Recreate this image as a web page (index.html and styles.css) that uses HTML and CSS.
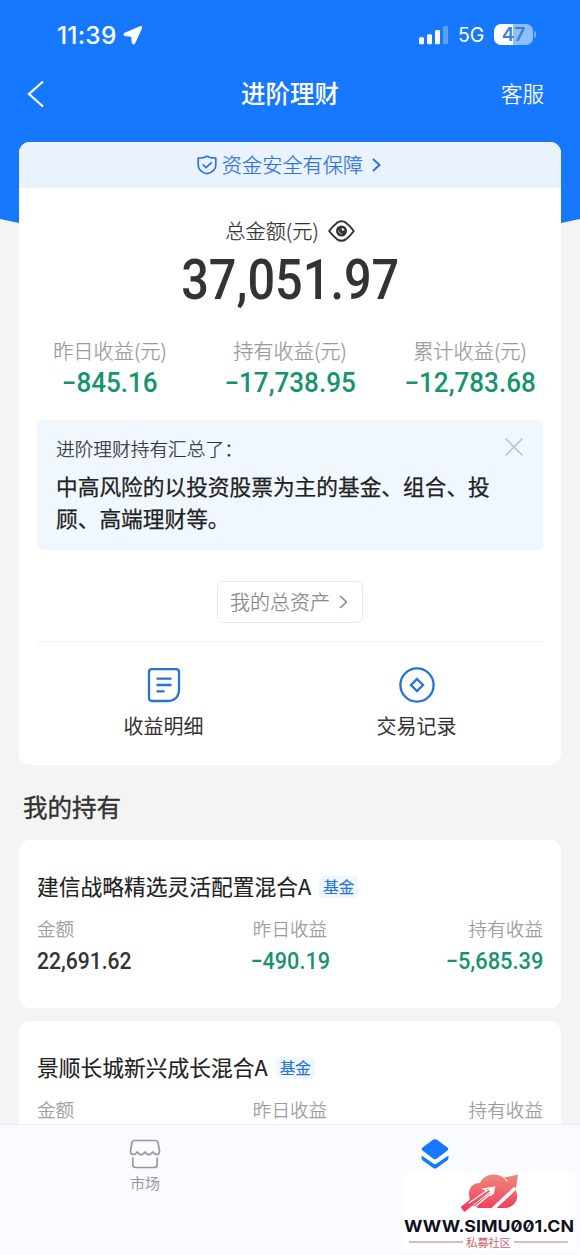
FILE: index.html
```html
<!DOCTYPE html>
<html lang="zh-CN">
<head>
<meta charset="utf-8">
<title>进阶理财</title>
<link rel="stylesheet" href="styles.css">
</head>
<body>
<div class="app">
  <main class="content">
    <header class="hero">
      <div class="status">
        <span class="clock">11:39</span>
        <svg class="locate" width="20" height="20" viewBox="0 0 20 20"><path d="M17.300 1.700 2 8.200C.8 8.800.8 10.400 2.200 10.600L8.800 11.200 9.300 17.500C9.500 19.100 11.100 19.200 11.700 18L18.500 3C18.900 2 18.300 1.300 17.300 1.700Z" fill="#fff" stroke="#fff" stroke-width="1.200"/></svg>
        <svg class="signal" width="30" height="20" viewBox="0 0 30 20"><g fill="#fff"><rect x="0" y="12.200" width="5" height="7" rx="1.300"/><rect x="8" y="9.200" width="5" height="10" rx="1.300"/><rect x="16" y="5" width="5" height="14.200" rx="1.300"/><rect x="24" y="1" width="5" height="18.200" rx="1.300" opacity=".3"/></g></svg>
        <span class="network">5G</span>
        <span class="battery">47</span>
        <span class="battery-cap"></span>
      </div>
      <nav class="nav">
        <svg class="back" width="18" height="28" viewBox="0 0 18 28"><path d="M16 1.500 2 14 16 26.500" fill="none" stroke="#fff" stroke-width="2.200"/></svg>
        <h1 class="title">进阶理财</h1>
        <span class="service">客服</span>
      </nav>
    </header>

    <section class="summary">
      <div class="safety">
        <svg width="20" height="20" viewBox="0 0 20 20" fill="none" stroke="#2e75da" stroke-width="1.700"><path d="M10 1.200C7.500 2.700 4.500 3.200 1.200 3.200V10c0 4.500 4 7.500 8.800 8.800 4.800-1.300 8.800-4.300 8.800-8.800V3.200C15.500 3.200 12.500 2.700 10 1.200Z" stroke-linejoin="round"/><path d="m5.800 9.300 3.300 3.300 5.600-5.300"/></svg>
        <span>资金安全有保障</span>
        <svg class="safety-arrow" width="9" height="14" viewBox="0 0 9 14"><path d="m1 1 6.500 6L1 13" fill="none" stroke="#2e75da" stroke-width="2"/></svg>
      </div>
      <div class="total-label">
        <span>总金额(元)</span>
        <svg width="27" height="22" viewBox="0 0 27 22"><path d="M1.200 11C3 8.500 5.500 5.500 8.800 2.900Q13.500-.4 18.200 2.900C21.500 5.500 24 8.500 25.800 11 24 13.500 21.500 16.500 18.200 19.100Q13.500 22.400 8.800 19.100C5.500 16.500 3 13.500 1.200 11Z" fill="none" stroke="#333" stroke-width="1.900"/><circle cx="13.500" cy="11" r="5.500" fill="#333"/><path d="M13.800 7.800V10.600H16.600A3.400 3.400 0 0 0 13.800 7.800Z" fill="#fff"/><path d="M10.700 10.500A3 3 0 0 0 14 13.800" fill="none" stroke="#fff" stroke-width=".7"/></svg>
      </div>
      <div class="total"><span class="total-num">37,051.97</span></div>
      <div class="stats">
        <div class="stat"><span class="stat-label">昨日收益(元)</span><span class="stat-value">−845.16</span></div>
        <div class="stat"><span class="stat-label">持有收益(元)</span><span class="stat-value">−17,738.95</span></div>
        <div class="stat"><span class="stat-label">累计收益(元)</span><span class="stat-value">−12,783.68</span></div>
      </div>
      <div class="tip">
        <div class="tip-head"><span>进阶理财持有汇总了：</span>
          <svg width="20" height="20" viewBox="0 0 20 20"><path d="m1.500 1.500 17 17m0-17-17 17" stroke="#bfc6d3" stroke-width="1.700"/></svg>
        </div>
        <p class="tip-body">中高风险的以投资股票为主的基金、组合、投顾、高端理财等。</p>
      </div>
      <div class="assets">
        <span>我的总资产</span>
        <svg width="9" height="14" viewBox="0 0 9 14"><path d="m1 1 6.500 6L1 13" fill="none" stroke="#888" stroke-width="1.600"/></svg>
      </div>
      <div class="actions">
        <div class="action">
          <svg width="36" height="36" viewBox="0 0 36 36" fill="none" stroke="#2672d9" stroke-width="2.300"><path d="M6 2.200H30Q33 2.200 33 5.200V22Q33 34 21 34H6Q3 34 3 31V5.200Q3 2.200 6 2.200Z"/><path d="M10.500 11.700H25.500M10.500 18H25.500M10.500 24.300H18.500"/></svg>
          <span>收益明细</span>
        </div>
        <div class="action">
          <svg width="36" height="36" viewBox="0 0 36 36" fill="none" stroke="#2672d9" stroke-width="2.300"><circle cx="18" cy="18" r="16.600"/><path d="m18 12 6 6-6 6-6-6Z"/></svg>
          <span>交易记录</span>
        </div>
      </div>
    </section>

    <h2 class="section-title">我的持有</h2>

    <article class="fund">
      <div class="fund-head"><span class="fund-name">建信战略精选灵活配置混合A</span><span class="tag">基金</span></div>
      <div class="fund-grid">
        <div class="cell"><span class="cell-label">金额</span><span class="cell-value">22,691.62</span></div>
        <div class="cell center"><span class="cell-label">昨日收益</span><span class="cell-value loss">−490.19</span></div>
        <div class="cell right"><span class="cell-label">持有收益</span><span class="cell-value loss">−5,685.39</span></div>
      </div>
    </article>
    <article class="fund">
      <div class="fund-head"><span class="fund-name">景顺长城新兴成长混合A</span><span class="tag">基金</span></div>
      <div class="fund-grid">
        <div class="cell"><span class="cell-label">金额</span></div>
        <div class="cell center"><span class="cell-label">昨日收益</span></div>
        <div class="cell right"><span class="cell-label">持有收益</span></div>
      </div>
    </article>
  </main>

  <footer class="tabbar">
    <div class="tab">
      <svg width="32" height="30" viewBox="0 0 32 30" fill="none" stroke="#999" stroke-width="1.700"><path d="M5.500 1.500H26.500Q28.600 1.500 29 3.500L30.500 12Q30.800 15.500 27.500 15.500 25.500 15.500 23.800 13 21.800 15.800 19.800 15.800 17.800 15.800 16 13 14.200 15.800 12.200 15.800 10.200 15.800 8.300 13 6.500 15.500 4.500 15.500 1.200 15.500 1.500 12L3 3.500Q3.400 1.500 5.500 1.500Z" stroke-linejoin="round"/><path d="M3.800 18.500V25.500Q3.800 28.500 6.800 28.500H25.200Q28.200 28.500 28.200 25.500V18.500"/></svg>
      <span>市场</span>
    </div>
    <div class="tab">
      <svg width="28" height="30" viewBox="0 0 28 30" fill="#1677ff"><path d="M12.300.6Q14-.3 15.700.6L26.400 8.600Q28.200 10.100 26.400 11.500L15.700 19.700Q14 20.700 12.300 19.700L1.600 11.500Q-.2 10.100 1.600 8.600Z"/><path d="M.6 16.500 12.300 24.400Q14 25.400 15.700 24.400L27.400 16.500V19.500Q27.300 20.700 26.200 21.500L15.700 29Q14 30 12.300 29L1.800 21.500Q.7 20.700.6 19.500Z"/></svg>
    </div>
  </footer>

  <div class="watermark">
    <svg width="172" height="78" viewBox="0 0 172 78">
      <defs><linearGradient id="cloud" gradientUnits="userSpaceOnUse" x1="0" y1="2" x2="0" y2="40"><stop offset="0" stop-color="#ee8a7c"/><stop offset="1" stop-color="#f5355a"/></linearGradient></defs>
      <path d="M66.500 25C64 17 70 10.500 77 11 82 0 99 0 103.500 9.500 110 8.500 114 14 113 19 117 28 110 36 102 36H72L66.500 32Z" fill="url(#cloud)"/>
      <path d="M62 40 87 21 89.500 24 91 15.500 81 17 83.500 19.500 66 32 78 37Z" fill="#fff"/>
      <path d="M57.500 35 83 15 87 19.500 61.500 40Z" fill="url(#cloud)"/>
      <path d="M66 31 84 18.500 80.500 17 91.500 15 89.500 25.500 87 22.500 70 36.500" fill="none" stroke="#fff" stroke-width="1.300"/>
      <path d="M89 38 114 14.500" stroke="#fff" stroke-width="3.600"/>
      <path d="M101 5.500 115 2.500 113 16.500 109.500 12.500 84 36H75L105 9Z" fill="url(#cloud)"/>
      <text class="mark-url" x="1" y="59.500" textLength="170" lengthAdjust="spacingAndGlyphs">WWW.SIMU001.CN</text>
      <path d="M6 70H60M111 70H165" stroke="#cf6f75" stroke-width="1.200"/>
      <text class="mark-name" x="63" y="74.500" textLength="45">私募社区</text>
    </svg>
  </div>
</div>
</body>
</html>
```
FILE: styles.css
```css
* { box-sizing: border-box; }
body {
  margin: 0;
  background: #f4f4f4;
  color: #333;
  font-family: "Noto Sans CJK SC", sans-serif;
}
h1, h2, p { margin: 0; }
svg { display: block; flex: none; }
.app {
  position: relative;
  display: flex;
  flex-direction: column;
  width: 580px;
  height: 1255px;
  overflow: hidden;
}
.content { height: 1124px; overflow: hidden; }

/* Header */
.hero {
  height: 240px;
  background: #1677ff;
  color: #fff;
  clip-path: polygon(0 0, 100% 0, 100% 219px, 561px 223px, 500px 235px, 80px 235px, 19px 223px, 0 219px);
}
.status {
  display: flex;
  align-items: center;
  height: 70px;
  padding: 0 44px 0 57px;
}
.clock { font: 500 24.500px/30px Inter, sans-serif; width: 62px; letter-spacing: .2px; }
.locate { margin-left: 4px; }
.signal { margin-left: auto; margin-bottom: 1px; }
.network { margin-left: 9px; width: 27px; font: 400 19.500px/24px Inter, sans-serif; }
.battery {
  margin-left: 9px;
  margin-bottom: 2px;
  width: 39px;
  height: 21px;
  border-radius: 7px;
  background: linear-gradient(90deg, #fff 48%, #8fbfff 48%);
  color: #3f7fd2;
  font: 600 19px/21px Inter, sans-serif;
  text-align: center;
}
.battery-cap { width: 2px; height: 7px; margin: 0 0 2px 1px; border-radius: 0 2px 2px 0; background: #73adff; }
.nav {
  display: grid;
  grid-template-columns: 1fr auto 1fr;
  align-items: center;
  height: 48px;
  padding: 0 36px 0 27px;
}
.title { font-size: 24.500px; line-height: 46px; font-weight: 500; padding-bottom: 2px; margin-right: -9px; }
.service { justify-self: end; font-size: 21.500px; line-height: 46px; padding-bottom: 2px; }
.service, .safety span, .total-label span, .stat-label, .tip-head span, .assets span, .cell-label {
  font-weight: 300;
  -webkit-text-stroke: .25px currentColor;
}

/* Summary card */
.summary {
  position: relative;
  width: 542px;
  height: 623px;
  margin: -98px 19px 0;
  background: #fff;
  border-radius: 11px;
  overflow: hidden;
}
.safety {
  display: flex;
  align-items: center;
  justify-content: center;
  gap: 5px;
  height: 46px;
  padding-right: 2px;
  background: #eaf2fe;
  color: #2e75da;
  font-size: 20.200px;
}
.safety span, .total-label span, .assets span { padding-bottom: 2px; }
.safety-arrow { margin-left: 4px; }
.total-label {
  display: flex;
  align-items: center;
  justify-content: center;
  gap: 9px;
  height: 30px;
  margin-top: 28px;
  font-size: 20.200px;
}
.total { display: flex; justify-content: center; height: 64px; margin-top: 1px; }
.total-num {
  font: 500 55px/66px Roboto, sans-serif;
  transform: scaleX(.885);
}
.stats { display: grid; grid-template-columns: repeat(3, 180px); height: 92px; padding: 25px 0 0 1px; }
.stat { display: flex; flex-direction: column; align-items: center; }
.stat-label { font-size: 20.200px; line-height: 30px; color: #999; }
.stat-value, .loss { color: #16936f; }
.stat-value { font: 500 27px/34px Roboto, sans-serif; transform: scaleX(.965); }
.tip {
  width: 506px;
  height: 130px;
  margin: 17px 18px 0;
  padding: 13px 19px;
  background: #f0f7ff;
  border-radius: 5px;
}
.tip-head { display: flex; justify-content: space-between; height: 30px; font-size: 18.700px; line-height: 30px; }
.tip-head svg { margin-top: 4px; }
.tip-body { width: 440px; margin-top: 7px; font-size: 21.700px; line-height: 32px; font-weight: 400; color: #222; -webkit-text-stroke: .25px currentColor; }
.assets {
  display: flex;
  align-items: center;
  justify-content: center;
  gap: 9px;
  width: 146px;
  height: 42px;
  margin: 31px auto 0;
  padding-right: 2px;
  border: 1px solid #e8e8e8;
  border-radius: 6px;
  font-size: 20px;
  color: #888;
}
.actions {
  display: grid;
  grid-template-columns: 1fr 1fr;
  margin: 18px 18px 0;
  padding-top: 25px;
  border-top: 1px solid #f3f3f3;
}
.action { display: flex; flex-direction: column; align-items: center; font-size: 20px; line-height: 30px; gap: 8px; }

/* Holdings */
.section-title { margin: 22px 0 0 23px; font-size: 24.500px; line-height: 39px; height: 40px; font-weight: 400; -webkit-text-stroke: .4px currentColor; }
.fund {
  width: 542px;
  height: 168px;
  margin: 13px 19px 0;
  padding: 30px 18px 0;
  background: #fff;
  border-radius: 11px;
}
.fund-head { display: flex; align-items: center; height: 32px; gap: 8px; }
.fund-name { font-size: 21.750px; line-height: 32px; color: #222; -webkit-text-stroke: .15px currentColor; }
.tag {
  width: 39px;
  height: 22px;
  margin-top: 1px;
  background: #eff7ff;
  border-radius: 3px;
  color: #2672d9;
  font-size: 15.500px;
  line-height: 21px;
  text-align: center;
  -webkit-text-stroke: .2px currentColor;
}
.fund-grid { display: grid; grid-template-columns: repeat(3, 1fr); padding-top: 11px; }
.cell { display: flex; flex-direction: column; align-items: flex-start; }
.cell-label { font-size: 18.600px; line-height: 30px; color: #999; }
.cell-value { font: 500 24px/34px Roboto, sans-serif; margin-top: 1px; transform: scaleX(.88); transform-origin: left; }
.center { align-items: center; }
.right { align-items: flex-end; }
.center .cell-value { transform: scaleX(.9); transform-origin: center; }
.right .cell-value { transform: scaleX(.91); transform-origin: right; }

/* Bottom navigation */
.tabbar {
  display: grid;
  grid-template-columns: 1fr 1fr;
  height: 131px;
  padding-top: 14px;
  background: #f9fbff;
  border-top: 1px solid #ececf0;
}
.tab { display: flex; flex-direction: column; align-items: center; gap: 3px; font-size: 15px; line-height: 22px; color: #999; }
.watermark { position: absolute; left: 403px; top: 1172px; width: 172px; height: 78px; background: #fff; }
.mark-url { font: 700 16px Inter, sans-serif; font-feature-settings: "zero"; fill: #101020; }
.mark-name { font-size: 11.500px; font-weight: 400; fill: #c9666d; }
```
